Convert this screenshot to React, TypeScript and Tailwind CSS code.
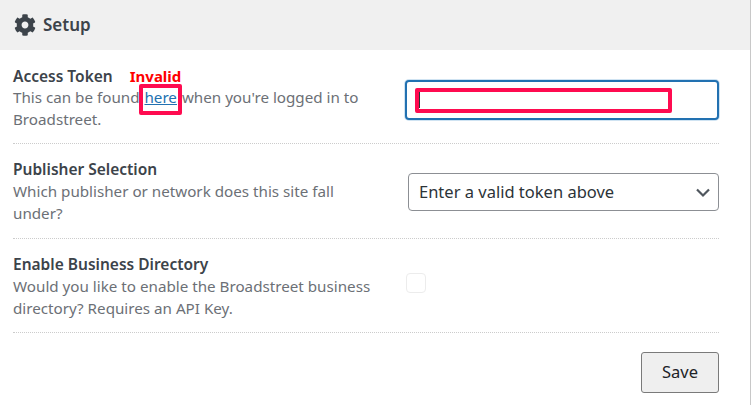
import React from "react";

function Row({ title, extra, children, control, rowClass, textClass, gapClass }: { title: string; extra?: React.ReactNode; children: React.ReactNode; control: React.ReactNode; rowClass: string; textClass: string; gapClass: string }) {
  return (
    <div className={`flex items-start border-b border-dotted border-[#cccccc] ${rowClass}`}>
      <div className={`w-[392px] shrink-0 pr-[28px] ${textClass}`}>
        <div className={`flex h-[20px] items-center text-[15.5px] leading-[20px] font-semibold text-[#3c434a] ${gapClass}`}>
          {title}
          {extra}
        </div>
        <p className="text-[15.2px] leading-[21.5px] text-[#6c7076]">{children}</p>
      </div>
      {control}
    </div>
  );
}

export default function App() {
  return (
    <div className="relative h-[405px] w-[751px] overflow-hidden border-r border-[#c8c8c8] bg-white font-['Noto_Sans','Open_Sans',sans-serif]">
      <div className="flex h-[50px] items-center gap-[7px] bg-[#f0f0f0] pl-[14px]">
        <svg viewBox="0 0 512 512" className="h-[22px] w-[22px] fill-[#3c434a]">
          <path d="M487.4 315.7l-42.6-24.6c4.3-23.2 4.3-47 0-70.2l42.6-24.6c4.9-2.8 7.1-8.6 5.5-14-11.1-35.6-30-67.8-54.7-94.6-3.8-4.1-10-5.1-14.8-2.3L380.8 110c-17.9-15.4-38.5-27.3-60.8-35.1V25.8c0-5.6-3.9-10.5-9.4-11.7-36.7-8.2-74.3-7.8-109.2 0-5.5 1.2-9.4 6.1-9.4 11.7V75c-22.2 7.9-42.8 19.8-60.8 35.1L88.7 85.5c-4.9-2.8-11-1.9-14.8 2.3-24.7 26.7-43.6 58.9-54.7 94.6-1.7 5.4.6 11.2 5.5 14L67.3 221c-4.3 23.2-4.3 47 0 70.2l-42.6 24.6c-4.9 2.8-7.1 8.6-5.5 14 11.1 35.6 30 67.8 54.7 94.6 3.8 4.1 10 5.1 14.8 2.3l42.6-24.6c17.9 15.4 38.5 27.3 60.8 35.1v49.2c0 5.6 3.9 10.5 9.4 11.7 36.7 8.2 74.3 7.8 109.2 0 5.5-1.2 9.4-6.1 9.4-11.7v-49.2c22.2-7.9 42.8-19.8 60.8-35.1l42.6 24.6c4.9 2.8 11 1.9 14.8-2.3 24.7-26.7 43.6-58.9 54.7-94.6 1.5-5.5-.7-11.3-5.6-14.1zM256 336c-44.1 0-80-35.9-80-80s35.9-80 80-80 80 35.9 80 80-35.9 80-80 80z" />
        </svg>
        <h2 className="text-[17px] leading-[22px] font-semibold text-[#3c434a]">Setup</h2>
      </div>

      <div className="px-[13px] pr-[31px]">
        <Row
          title="Access Token"
          rowClass="h-[94px]"
          textClass="pt-[16px]"
          gapClass="mb-[1px]"
          extra={<span className="ml-[17px] text-[15px] font-bold text-[#ff0000]">Invalid</span>}
          control={
            <div className="mt-[30px] flex h-[40px] w-[315px] items-center rounded-[4px] border-2 border-[#2271b1] bg-white pl-[12px] shadow-[0_0_0_1px_#cfe3f2]">
              <div className="h-[16px] w-[1px] bg-[#2c3338]" />
            </div>
          }
        >
          This can be found <a className="ml-[1px] mr-[1px] text-[#2271b1] underline">here</a> when you're logged in to Broadstreet.
        </Row>
        <Row
          title="Publisher Selection"
          rowClass="h-[95px]"
          textClass="pt-[15px]"
          gapClass="mb-[2px]"
          control={
            <div className="ml-[3px] mt-[29px] flex h-[38px] w-[312px] items-center justify-between rounded-[4px] border border-[#8c8f94] bg-white pl-[10px] pr-[7px] text-[16.5px] text-[#2c3338]">
              <span className="pt-[1px]">Enter a valid token above</span>
              <svg viewBox="0 0 16 16" className="h-[16px] w-[16px] fill-none stroke-[#50575e] stroke-[2.2]">
                <path d="M2 5.5l6 6 6-6" />
              </svg>
            </div>
          }
        >
          Which publisher or network does this site fall under?
        </Row>
        <Row
          title="Enable Business Directory"
          rowClass="h-[94px]"
          textClass="pt-[15px]"
          gapClass="mb-[2px]"
          control={<div className="ml-[1px] mt-[34px] h-[20px] w-[20px] rounded-[4px] border border-[#ececec] bg-white" />}
        >
          Would you like to enable the Broadstreet business directory? Requires an API Key.
        </Row>
        <div className="flex justify-end pt-[19px]">
          <button className="flex h-[41px] w-[78px] items-center justify-center rounded-[3px] border border-[#7a7a7a] bg-[#efefef] text-[16.5px] text-[#1d2327]">
            Save
          </button>
        </div>
      </div>

      <div className="absolute left-[139px] top-[84px] h-[31px] w-[43px] rounded-[2px] border-[4px] border-[#ff0b50]" />
      <div className="absolute left-[415px] top-[88px] h-[25px] w-[257px] rounded-[2px] border-[4px] border-[#ff0b50]" />
    </div>
  );
}
